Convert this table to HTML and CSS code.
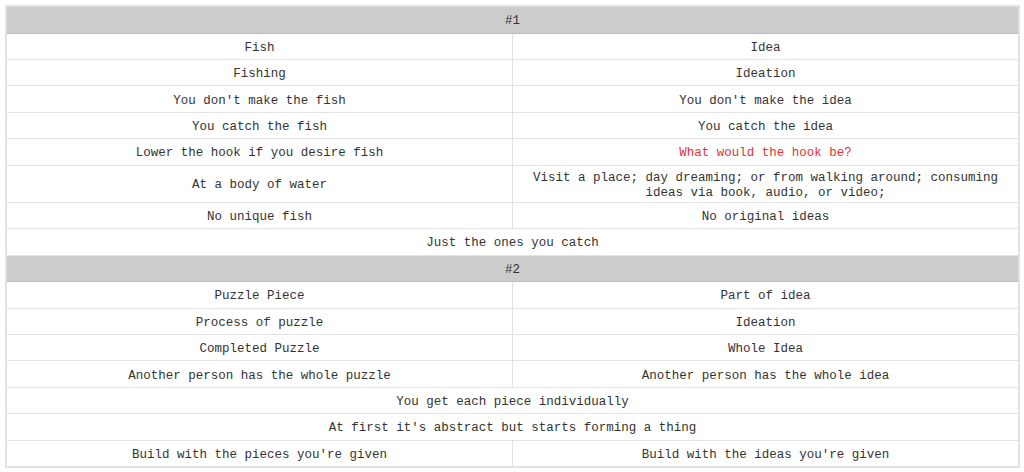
FILE: index.html
```html
<!DOCTYPE html>
<html>
<head>
<meta charset="utf-8">
<link rel="stylesheet" href="styles.css">
</head>
<body>
<table class="grid">
  <colgroup><col class="half"><col class="half"></colgroup>
  <tbody>
    <tr class="head"><td colspan="2">#1</td></tr>
    <tr><td>Fish</td><td>Idea</td></tr>
    <tr><td>Fishing</td><td>Ideation</td></tr>
    <tr><td>You don't make the fish</td><td>You don't make the idea</td></tr>
    <tr><td>You catch the fish</td><td>You catch the idea</td></tr>
    <tr><td>Lower the hook if you desire fish</td><td class="red">What would the hook be?</td></tr>
    <tr class="double"><td>At a body of water</td><td>Visit a place; day dreaming; or from walking around; consuming ideas via book, audio, or video;</td></tr>
    <tr><td>No unique fish</td><td>No original ideas</td></tr>
    <tr><td colspan="2">Just the ones you catch</td></tr>
    <tr class="head"><td colspan="2">#2</td></tr>
    <tr><td>Puzzle Piece</td><td>Part of idea</td></tr>
    <tr><td>Process of puzzle</td><td>Ideation</td></tr>
    <tr><td>Completed Puzzle</td><td>Whole Idea</td></tr>
    <tr><td>Another person has the whole puzzle</td><td>Another person has the whole idea</td></tr>
    <tr><td colspan="2">You get each piece individually</td></tr>
    <tr><td colspan="2">At first it's abstract but starts forming a thing</td></tr>
    <tr><td>Build with the pieces you're given</td><td>Build with the ideas you're given</td></tr>
  </tbody>
</table>
</body>
</html>
```
FILE: styles.css
```css
html, body {
  background: #ffffff;
}
body {
  margin: 5px 4px 5px 5px;
  font-family: "Liberation Mono", "Courier New", monospace;
  font-size: 12.5px;
  color: #333333;
}
.grid {
  width: 100%;
  border-collapse: collapse;
  table-layout: fixed;
  border: 2px solid #e2e2e2;
}
.half {
  width: 50%;
}
.grid td {
  border: 1px solid #e2e2e2;
  text-align: center;
  vertical-align: middle;
  padding: 5px 12px 1px;
  line-height: 15px;
  height: 19.45px;
}
.grid tr.head td {
  background: #cccccc;
  border: 1px solid #bbbbbb;
  height: 19.5px;
}
.grid td.red {
  color: #e8312f;
}
.grid tr.double td {
  height: 30px;
}
```
